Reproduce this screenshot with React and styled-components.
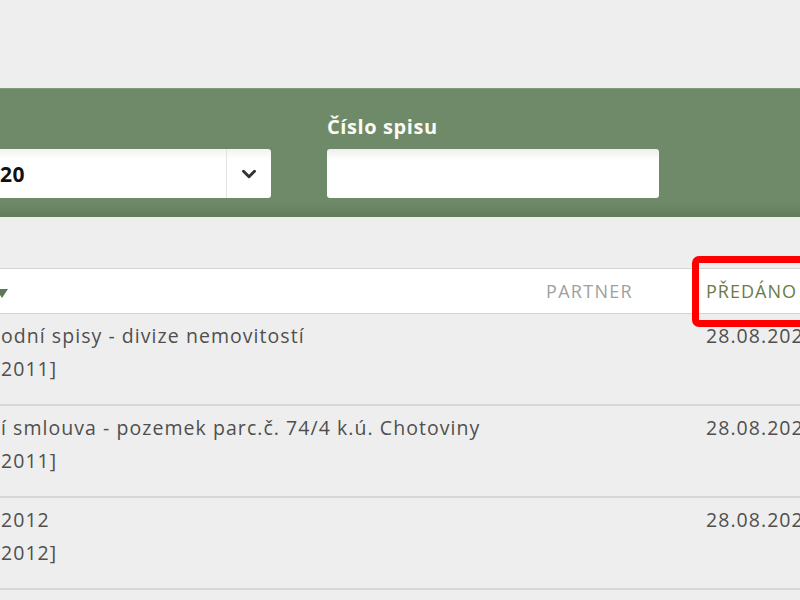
import React from "react";
import styled, { createGlobalStyle } from "styled-components";
import { ChevronDown } from "lucide-react";

const Global = createGlobalStyle`
  html, body { margin: 0; padding: 0; background: #eeeeee; overflow: hidden; }
  body { font-family: "Open Sans", "Liberation Sans", sans-serif; }
`;

const Page = styled.div`
  width: 800px;
  height: 600px;
  overflow: hidden;
  padding-top: 88px;
  box-sizing: border-box;
`;

const FilterBand = styled.div`
  height: 129px;
  box-sizing: border-box;
  background: linear-gradient(to bottom, #6e8a68 0%, #6e8a68 88%, #617c5b 100%);
  border-top: 1px solid #7f9a79;
  display: flex;
  align-items: flex-end;
  gap: 56px;
  padding-bottom: 19px;
`;

const Field = styled.div`
  display: flex;
  flex-direction: column;
  gap: 9px;
  width: ${(p) => p.$w}px;
  margin-left: ${(p) => p.$ml || 0}px;
`;

const Label = styled.label`
  color: #fbfbf4;
  font-weight: 700;
  font-size: 20px;
  line-height: 26px;
  letter-spacing: 0.6px;
`;

const SelectBox = styled.div`
  height: 49px;
  background: linear-gradient(to bottom, #f2f2f2 0%, #ffffff 20%, #ffffff 100%);
  border-radius: 3px;
  display: flex;
  align-items: center;
`;

const SelectValue = styled.div`
  flex: 1;
  font-weight: 700;
  font-size: 21px;
  letter-spacing: 0.5px;
  color: #111;
  padding-left: 6px;
  white-space: nowrap;
`;

const SelectArrow = styled.div`
  width: 44px;
  align-self: stretch;
  border-left: 1px solid #e2e2e2;
  display: flex;
  align-items: center;
  justify-content: center;
  color: #333;
`;

const TextInput = styled.div`
  height: 49px;
  background: linear-gradient(to bottom, #eeeeee 0%, #ffffff 22%, #ffffff 100%);
  border-radius: 3px;
`;

const Table = styled.div`
  margin-top: 51px;
`;

const Cols = `
  display: grid;
  grid-template-columns: 546px 160px 1fr;
`;

const HeaderRow = styled.div`
  ${Cols}
  height: 46px;
  box-sizing: border-box;
  background: #fff;
  border-top: 1px solid #d4d4d4;
  border-bottom: 1px solid #d4d4d4;
  align-items: center;
`;

const HeadCell = styled.div`
  position: relative;
  font-size: 18px;
  letter-spacing: ${(p) => (p.$active ? "1px" : "1.3px")};
  color: ${(p) => (p.$active ? "#6b7b45" : "#a0a0a0")};
  white-space: nowrap;
`;

const SortArrow = styled.span`
  display: inline-block;
  width: 0;
  height: 0;
  margin-left: -4px;
  border-left: 6px solid transparent;
  border-right: 6px solid transparent;
  border-top: 9px solid #5d7a55;
  vertical-align: middle;
`;

const Highlight = styled.div`
  position: absolute;
  left: -14px;
  top: -23px;
  width: 130px;
  height: 71px;
  border: 7px solid #ff0000;
  border-radius: 7px;
  box-sizing: border-box;
`;

const Row = styled.div`
  ${Cols}
  height: 92px;
  box-sizing: border-box;
  border-bottom: 2px solid #d6d6d6;
  padding-top: 5px;
  color: #4f4f4f;
  font-size: 19.5px;
  letter-spacing: 1.05px;
`;

const TitleCell = styled.div`
  display: flex;
  flex-direction: column;
  line-height: 33px;
  white-space: nowrap;
  padding-left: 1px;
`;

const Cell = styled.div`
  line-height: 33px;
  white-space: nowrap;
`;

const rows = [
  { title: "odní spisy - divize nemovitostí", sub: "2011]", date: "28.08.2020" },
  { title: "í smlouva - pozemek parc.č. 74/4 k.ú. Chotoviny", sub: "2011]", date: "28.08.2020" },
  { title: "2012", sub: "2012]", date: "28.08.2020" },
];

export default function App() {
  return (
    <>
      <Global />
      <Page>
        <FilterBand>
          <Field $w={277} $ml={-6}>
            <SelectBox>
              <SelectValue>20</SelectValue>
              <SelectArrow>
                <ChevronDown size={22} strokeWidth={3.2} />
              </SelectArrow>
            </SelectBox>
          </Field>
          <Field $w={332}>
            <Label>Číslo spisu</Label>
            <TextInput />
          </Field>
        </FilterBand>
        <Table>
          <HeaderRow>
            <HeadCell>
              <SortArrow />
            </HeadCell>
            <HeadCell>PARTNER</HeadCell>
            <HeadCell $active>
              PŘEDÁNO
              <Highlight />
            </HeadCell>
          </HeaderRow>
          {rows.map((r, i) => (
            <Row key={i}>
              <TitleCell>
                <span>{r.title}</span>
                <span>{r.sub}</span>
              </TitleCell>
              <Cell />
              <Cell>{r.date}</Cell>
            </Row>
          ))}
        </Table>
      </Page>
    </>
  );
}
